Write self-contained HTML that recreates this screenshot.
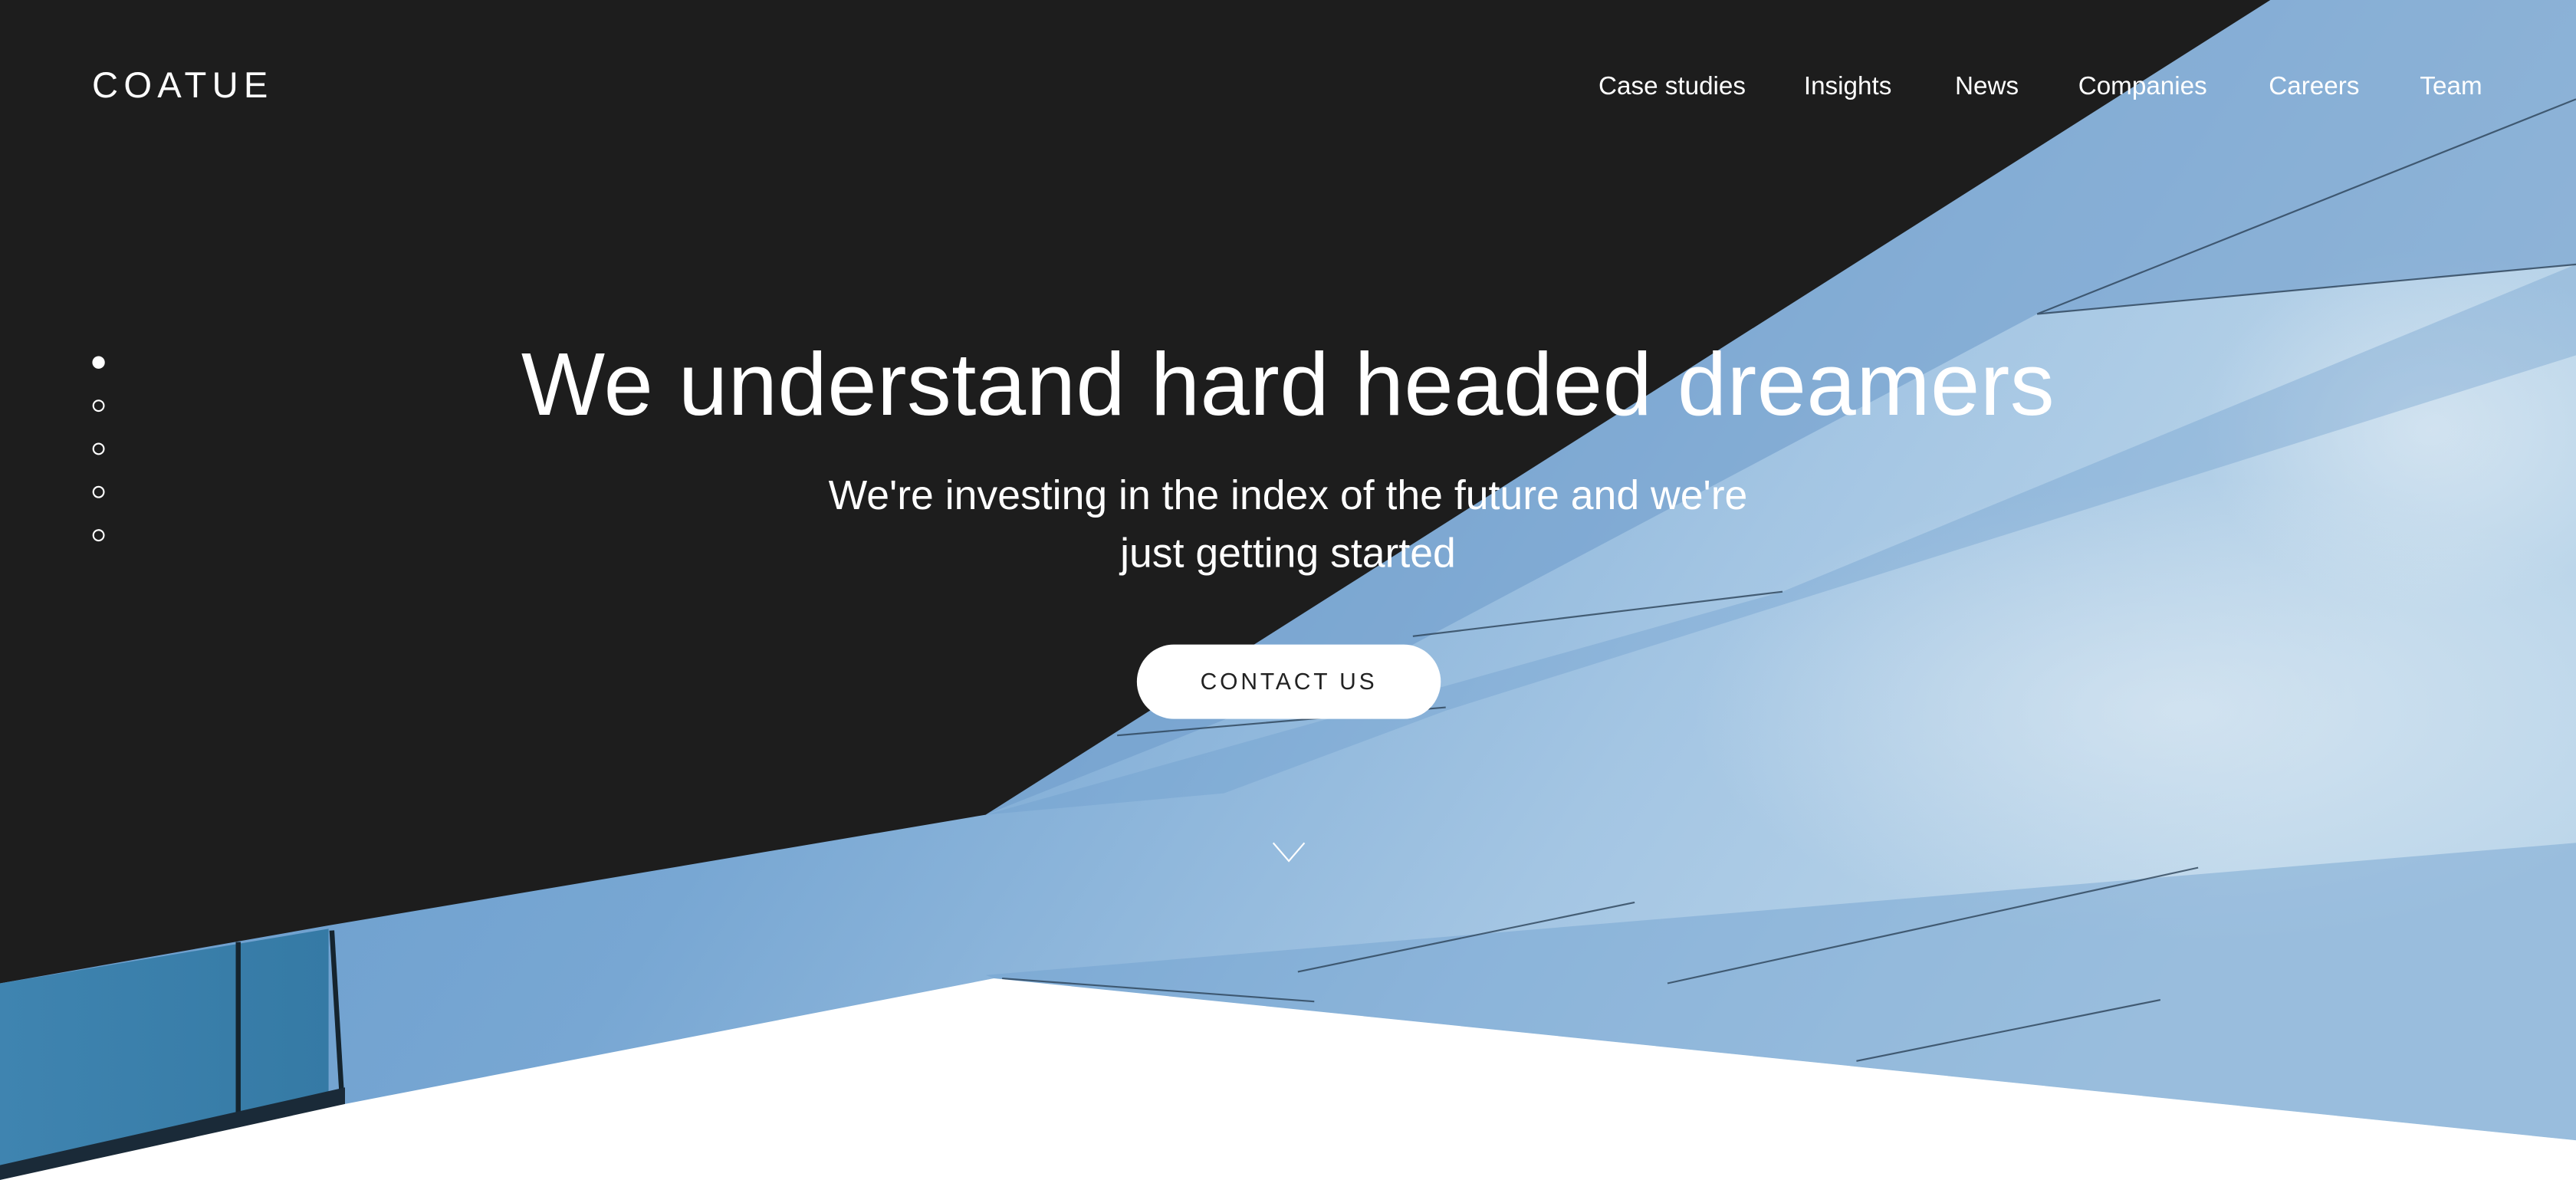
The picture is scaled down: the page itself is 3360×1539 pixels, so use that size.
<!DOCTYPE html>
<html><head><meta charset="utf-8"><style>
html,body{margin:0;padding:0;background:#1d1d1d;overflow:hidden}
body{width:3360px;height:1539px;position:relative}
#bg{position:absolute;left:0;top:0;width:3360px;height:1539px}
#w{position:absolute;left:0;top:0;width:1568px;height:714px;transform-origin:0 0;transform:scale(2.14286,2.15546);color:#fff;font-family:"Liberation Sans",sans-serif}
.nav{position:absolute;top:44px;font-size:15.5px;white-space:nowrap}
.logo{position:absolute;left:56px;top:39px;font-size:22px;letter-spacing:3.4px;font-weight:normal}
h1{position:absolute;left:0;width:1568px;top:202px;margin:0;text-align:center;font-size:54px;font-weight:normal;letter-spacing:0.2px}
.sub{position:absolute;left:0;width:1568px;top:283px;text-align:center;font-size:25px;line-height:35px;font-weight:normal}
.btn{position:absolute;left:692px;top:390px;width:185px;height:45px;border-radius:23px;background:#fff;color:#222;font-size:14px;letter-spacing:1.8px;text-align:center;line-height:45px}
</style></head><body>
<svg id="bg" viewBox="0 0 1568 714" preserveAspectRatio="none">
<defs>
<linearGradient id="sky" x1="0" y1="0" x2="1" y2="0.3">
<stop offset="0" stop-color="#5f95c8"/>
<stop offset="0.45" stop-color="#78a7d3"/>
<stop offset="0.75" stop-color="#a3c5e3"/>
<stop offset="1" stop-color="#bcd6ea"/>
</linearGradient>
<linearGradient id="bld" x1="0" y1="0" x2="1" y2="0">
<stop offset="0" stop-color="#3f84b0"/>
<stop offset="1" stop-color="#357aa5"/>
</linearGradient>
<radialGradient id="cl" cx="0.5" cy="0.5" r="0.5">
<stop offset="0" stop-color="#dce9f3" stop-opacity="0.7"/>
<stop offset="1" stop-color="#dce9f3" stop-opacity="0"/>
</radialGradient>
</defs>
<rect width="1568" height="714" fill="#1d1d1d"/>
<polygon points="1382,0 1568,0 1568,714 0,714 0,595 200,560 600,493" fill="url(#sky)"/>
<ellipse cx="1330" cy="430" rx="300" ry="140" fill="url(#cl)"/>
<ellipse cx="1480" cy="260" rx="140" ry="110" fill="url(#cl)"/>
<polygon points="1382,0 1568,0 1568,160 1240,190 860,390 600,493" fill="#6f9dcb" opacity="0.6"/>
<polygon points="600,493 1085,358 1568,160 1568,215 880,430 745,480" fill="#6a9acb" opacity="0.35"/>
<polygon points="600,590 1568,510 1568,690 605,592" fill="#6f9fcf" opacity="0.45"/>
<polygon points="0,595 200,562 200,668 0,712" fill="url(#bld)"/>
<line x1="145" y1="570" x2="145" y2="675" stroke="#15242e" stroke-width="3"/>
<line x1="202" y1="563" x2="208" y2="662" stroke="#15242e" stroke-width="3"/>
<polygon points="0,705 210,658 210,670 0,714" fill="#1a2a38"/>
<g stroke="#2c4258" stroke-width="1" fill="none" opacity="0.8">
<line x1="1240" y1="190" x2="1568" y2="160"/>
<line x1="860" y1="385" x2="1085" y2="358"/>
<line x1="680" y1="445" x2="880" y2="428"/>
<line x1="790" y1="588" x2="995" y2="546"/>
<line x1="1015" y1="595" x2="1338" y2="525"/>
<line x1="1130" y1="642" x2="1315" y2="605"/>
<line x1="610" y1="592" x2="800" y2="606"/>
<line x1="1568" y1="60" x2="1240" y2="190"/>
</g>
<polygon points="0,714 210,668 605,592 1568,690 1568,714" fill="#ffffff"/>
</svg>
<div id="w">
<div class="logo">COATUE</div>
<div class="nav" style="left:973px">Case studies</div>
<div class="nav" style="left:1098px">Insights</div>
<div class="nav" style="left:1190px">News</div>
<div class="nav" style="left:1265px">Companies</div>
<div class="nav" style="left:1381px">Careers</div>
<div class="nav" style="left:1473px">Team</div>
<svg style="position:absolute;left:50px;top:210px" width="20" height="125">
<circle cx="10" cy="9.3" r="3.8" fill="#fff"/>
<circle cx="10" cy="35.5" r="3.2" fill="none" stroke="#fff" stroke-width="1"/>
<circle cx="10" cy="61.6" r="3.2" fill="none" stroke="#fff" stroke-width="1"/>
<circle cx="10" cy="87.7" r="3.2" fill="none" stroke="#fff" stroke-width="1"/>
<circle cx="10" cy="113.9" r="3.2" fill="none" stroke="#fff" stroke-width="1"/>
</svg>
<h1>We understand hard headed dreamers</h1>
<div class="sub">We're investing in the index of the future and we're<br>just getting started</div>
<div class="btn">CONTACT US</div>
<svg style="position:absolute;left:773px;top:508px" width="24" height="16"><polyline points="2,2 11.5,13 21,2" fill="none" stroke="#fff" stroke-width="1"/></svg>
</div>
</body></html>
